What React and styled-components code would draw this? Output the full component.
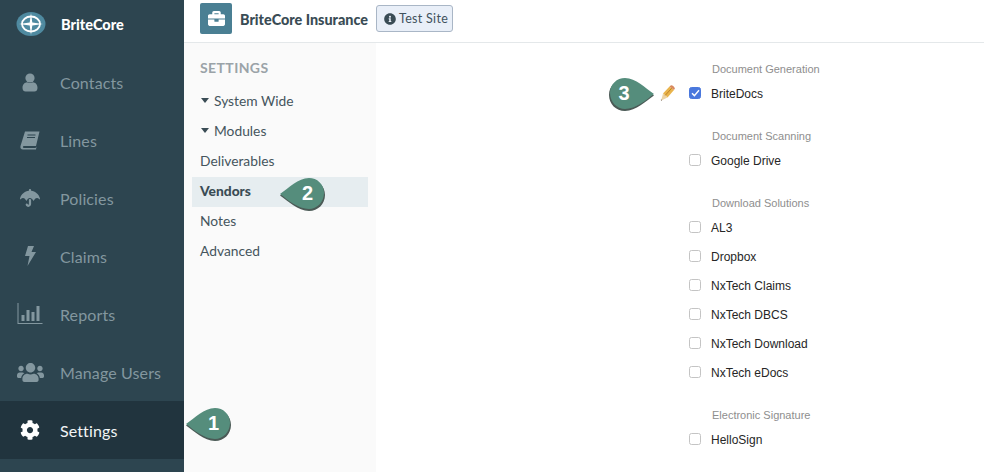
import styled, { createGlobalStyle } from "styled-components";
import { FaBriefcase, FaCog, FaInfoCircle, FaUmbrella, FaUsers } from "react-icons/fa";

const GlobalStyle = createGlobalStyle`
  html, body { margin: 0; padding: 0; background: #fff; overflow: hidden; }
`
const Page = styled.div`
  display: flex;
  width: 984px;
  height: 472px;
  overflow: hidden;
  position: relative;
  font-family: "Lato", sans-serif;
`
const Sidebar = styled.nav`
  width: 184px;
  flex-shrink: 0;
  background: #2d4550;
  display: flex;
  flex-direction: column;
`
const Brand = styled.div`
  height: 53px;
  padding: 0 0 5px 16px;
  box-sizing: border-box;
  display: flex;
  align-items: center;
  gap: 15px;
  color: #fff;
  font-weight: 900;
  font-size: 14.5px;
`
const NavItem = styled.a`
  height: 58px;
  flex-shrink: 0;
  display: flex;
  align-items: center;
  color: ${(props) => (props.$active ? "#f2f5f6" : "#83979f")};
  background: ${(props) => (props.$active ? "#21343e" : "transparent")};
  font-size: 16px;
  letter-spacing: 0.12px;
`
const NavIcon = styled.span`
  width: 60px;
  display: flex;
  justify-content: center;
  & svg { display: block; }
`
const Main = styled.div`
  flex: 1;
  display: flex;
  flex-direction: column;
  min-width: 0;
`
const TopBar = styled.header`
  height: 43px;
  box-sizing: border-box;
  flex-shrink: 0;
  border-bottom: 1px solid #e4e8ea;
  display: flex;
  align-items: center;
  padding: 0 0 5px 16px;
`
const CompanyIcon = styled.div`
  width: 32px;
  height: 31px;
  border-radius: 2px;
  background: #4a7f93;
  color: #fff;
  display: flex;
  align-items: center;
  justify-content: center;
  margin-right: 8px;
`
const CompanyName = styled.span`
  font-weight: 900;
  font-size: 14.4px;
  color: #3a4c55;
  margin: 1px 8px 0 0;
`
const SiteBadge = styled.span`
  height: 27px;
  box-sizing: border-box;
  padding: 0 4px 0 7px;
  display: flex;
  align-items: center;
  gap: 3px;
  border: 1px solid #a9b6c6;
  border-radius: 3px;
  background: #e9eff8;
  color: #41525c;
  font-size: 12.5px;
  letter-spacing: 0.3px;
`
const Body = styled.div`
  flex: 1;
  display: flex;
  min-height: 0;
`
const SubNav = styled.aside`
  width: 192px;
  flex-shrink: 0;
  background: #fafafa;
  padding: 16px 8px 0;
  box-sizing: border-box;
`
const SubTitle = styled.div`
  color: #9aa3a8;
  font-weight: 700;
  font-size: 14px;
  letter-spacing: 0.4px;
  padding: 0 8px;
  height: 28px;
  line-height: 18px;
`
const SubItem = styled.div`
  height: 30px;
  box-sizing: border-box;
  padding: 0 8px 4px;
  display: flex;
  align-items: center;
  gap: 5px;
  color: ${(props) => (props.$active ? "#3a4c55" : "#45555d")};
  font-size: 13.8px;
  font-weight: ${(props) => (props.$active ? 900 : 400)};
  background: ${(props) => (props.$active ? "#e6edf0" : "transparent")};
`
const Caret = styled.i`
  width: 0;
  height: 0;
  margin-left: 1px;
  border-left: 4.5px solid transparent;
  border-right: 4.5px solid transparent;
  border-top: 5px solid #3a4c55;
`
const Content = styled.section`
  flex: 1;
  padding: 15px 0 0 312px;
  font-family: "Liberation Sans", Arial, sans-serif;
`
const Group = styled.div`
  margin-bottom: 17px;
`
const GroupTitle = styled.div`
  color: #8e8e8e;
  font-size: 11px;
  height: 21px;
  line-height: 22px;
  padding-left: 24px;
`
const OptionRow = styled.label`
  position: relative;
  height: 29px;
  display: flex;
  align-items: center;
  color: #262626;
  font-size: 12px;
  gap: 10px;
`
const Box = styled.span`
  width: 12px;
  height: 12px;
  margin: 0 0 2px 1px;
  box-sizing: border-box;
  border-radius: 2.5px;
  border: 1px solid ${(props) => (props.$checked ? "#4a78dd" : "#c4c4c4")};
  background: ${(props) => (props.$checked ? "#4a78dd" : "#fff")};
  display: flex;
  align-items: center;
  justify-content: center;
`
const PencilSpot = styled.span`
  position: absolute;
  left: -28px;
  top: 6px;
  display: flex;
`
const Callout = styled.div`
  position: absolute;
  left: ${(props) => props.$x}px;
  top: ${(props) => props.$y}px;
  width: 48px;
  height: 36px;
  display: flex;
  align-items: center;
  justify-content: center;
  color: #fff;
  font-family: "Liberation Sans", Arial, sans-serif;
  font-size: 20px;
  & svg { position: absolute; inset: 0; }
  & b {
    position: relative;
    font-weight: 700;
    margin-top: -3px;
    margin-left: ${(props) => (props.$flip ? "-14px" : "9px")};
  }
`

function Logo() {
  return (
    <svg width="30" height="24" viewBox="0 0 30 24">
      <ellipse cx="15" cy="12" rx="14.5" ry="12" fill="#4f8aa0" />
      <ellipse cx="15" cy="12" rx="9" ry="7.5" fill="none" stroke="#fff" strokeWidth="1.8" />
      <path d="M15 1 L16.3 10.5 L27 12 L16.3 13.5 L15 23 L13.7 13.5 L3 12 L13.7 10.5 Z" fill="#fff" />
    </svg>
  )
}

function UserIcon() {
  return (
    <svg width="16" height="19" viewBox="0 0 16 19" fill="#83979f">
      <circle cx="8" cy="5" r="4.6" />
      <path d="M0.5 15 C0.5 11 3 9.5 5 9.3 C6.5 10.3 9.5 10.3 11 9.3 C13 9.5 15.5 11 15.5 15 C15.5 17.5 14 18.5 12.5 18.5 L3.5 18.5 C2 18.5 0.5 17.5 0.5 15 Z" />
    </svg>
  )
}

function BookIcon() {
  return (
    <svg width="20" height="19" viewBox="0 0 20 19">
      <path d="M5 0.5 L19.5 0.5 L16 15 L4 15 C2.5 15 2.5 17 4 17 L15.5 17 L16.5 15.5 L16 18.5 L3 18.5 C1 18.5 0 17 0.5 15 Z" fill="#83979f" />
      <path d="M7.5 4 H15.5 M7 6.5 H15" stroke="#2d4550" strokeWidth="1.2" />
    </svg>
  )
}

function BoltIcon() {
  return (
    <svg width="11" height="20" viewBox="0 0 11 20" fill="#83979f">
      <path d="M3 0 L9 0 L6.5 6 L11 6 L2.5 20 L4.5 10 L0 10 Z" />
    </svg>
  )
}

function ReportsIcon() {
  return (
    <svg width="26" height="22" viewBox="0 0 26 22" fill="#83979f">
      <path d="M0.5 0 H1.5 V20 H25.5 V21 H0.5 Z" />
      <rect x="4.5" y="12" width="3" height="6" />
      <rect x="9.5" y="7" width="3" height="11" />
      <rect x="14.5" y="9" width="3" height="9" />
      <rect x="19.5" y="3" width="3" height="15" />
    </svg>
  )
}

function Pencil() {
  return (
    <svg width="15" height="16" viewBox="0 0 15 16">
      <path d="M3 8.5 L9.5 1.5 L14 5 L7.5 12.5 Z" fill="#e9b44c" />
      <path d="M9.5 1.5 L11 0.2 C12 -0.2 15 2 14.8 3.5 L14 5 Z" fill="#d9895f" />
      <path d="M3 8.5 L7.5 12.5 L1.2 15.6 Z" fill="#ecd3a4" />
      <path d="M0.9 14.4 L2.2 15 L1 15.8 Z" fill="#5a4a36" />
      <path d="M5.2 10.4 L11.7 3.2" stroke="#bf8226" strokeWidth="1" />
    </svg>
  )
}

function Tag({ x, y, flip, children }) {
  // teardrop pointing left, mirrored for the third one
  return (
    <Callout $x={x} $y={y} $flip={flip}>
      <svg width="48" height="36" viewBox="0 0 48 36" style={flip ? { transform: "scaleX(-1)" } : undefined}>
        <path d="M1 18.5 C10 13 19 3.5 30 3 C39 3 46 9 46 18 C46 27 39 34 30 34 C19 34 9 24 1 18.5 Z" fill="#4b5a56" />
        <path d="M1 17 C10 11 19 1 30 1 C38 1 45 7 45 16 C45 25 38 32 30 32 C19 32 9 23 1 17 Z" fill="#558d7c" />
      </svg>
      <b>{children}</b>
    </Callout>
  )
}

const navItems = [
  { label: "Contacts", icon: <UserIcon /> },
  { label: "Lines", icon: <BookIcon /> },
  { label: "Policies", icon: <FaUmbrella size={20} /> },
  { label: "Claims", icon: <BoltIcon /> },
  { label: "Reports", icon: <ReportsIcon /> },
  { label: "Manage Users", icon: <FaUsers size={27} /> },
  { label: "Settings", icon: <FaCog size={20} color="#fff" />, active: true },
]

const groups = [
  { title: "Document Generation", options: [{ label: "BriteDocs", checked: true }] },
  { title: "Document Scanning", options: [{ label: "Google Drive" }] },
  {
    title: "Download Solutions",
    options: [
      { label: "AL3" },
      { label: "Dropbox" },
      { label: "NxTech Claims" },
      { label: "NxTech DBCS" },
      { label: "NxTech Download" },
      { label: "NxTech eDocs" },
    ],
  },
  { title: "Electronic Signature", options: [{ label: "HelloSign" }] },
]

export default function App() {
  return (
    <Page>
      <GlobalStyle />
      <Sidebar>
        <Brand>
          <Logo />
          BriteCore
        </Brand>
        {navItems.map((item) => (
          <NavItem key={item.label} $active={item.active}>
            <NavIcon>{item.icon}</NavIcon>
            {item.label}
          </NavItem>
        ))}
      </Sidebar>
      <Main>
        <TopBar>
          <CompanyIcon>
            <FaBriefcase size={17} />
          </CompanyIcon>
          <CompanyName>BriteCore Insurance</CompanyName>
          <SiteBadge>
            <FaInfoCircle size={12} color="#3a4c55" />
            Test Site
          </SiteBadge>
        </TopBar>
        <Body>
          <SubNav>
            <SubTitle>SETTINGS</SubTitle>
            <SubItem>
              <Caret />
              System Wide
            </SubItem>
            <SubItem>
              <Caret />
              Modules
            </SubItem>
            <SubItem>Deliverables</SubItem>
            <SubItem $active>Vendors</SubItem>
            <SubItem>Notes</SubItem>
            <SubItem>Advanced</SubItem>
          </SubNav>
          <Content>
            {groups.map((group) => (
              <Group key={group.title}>
                <GroupTitle>{group.title}</GroupTitle>
                {group.options.map((option) => (
                  <OptionRow key={option.label}>
                    {option.checked && (
                      <PencilSpot>
                        <Pencil />
                      </PencilSpot>
                    )}
                    <Box $checked={option.checked}>
                      {option.checked && (
                        <svg width="9" height="8" viewBox="0 0 9 8">
                          <path d="M1 4.2 L3.4 6.6 L8 1.2" fill="none" stroke="#fff" strokeWidth="1.4" />
                        </svg>
                      )}
                    </Box>
                    {option.label}
                  </OptionRow>
                ))}
              </Group>
            ))}
          </Content>
        </Body>
      </Main>
      <Tag x={185} y={407}>1</Tag>
      <Tag x={279} y={177}>2</Tag>
      <Tag x={607} y={77} flip>3</Tag>
    </Page>
  )
}
